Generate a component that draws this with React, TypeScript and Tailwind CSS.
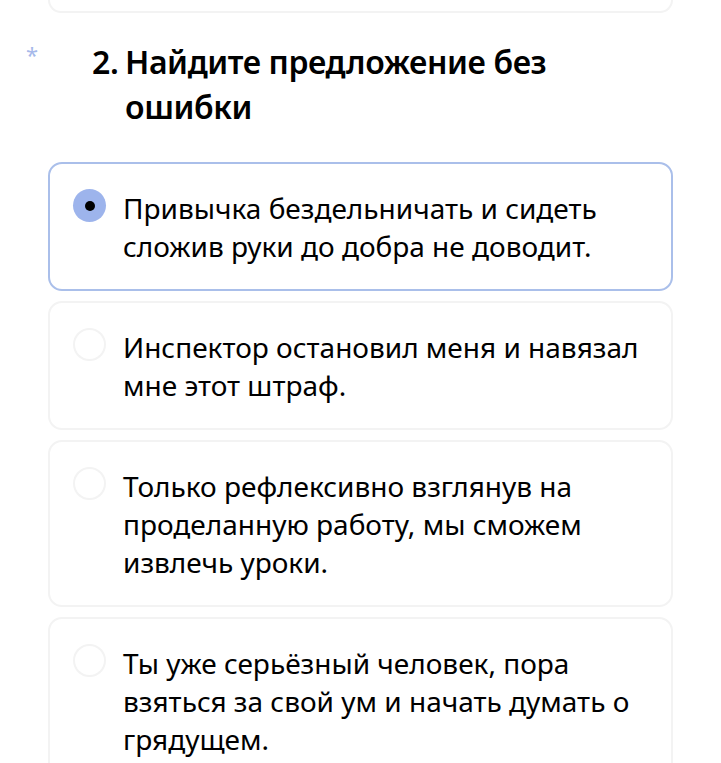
import React from "react";

const options = [
  { lines: ["Привычка бездельничать и сидеть", "сложив руки до добра не доводит."], selected: true },
  { lines: ["Инспектор остановил меня и навязал", "мне этот штраф."], selected: false },
  { lines: ["Только рефлексивно взглянув на", "проделанную работу, мы сможем", "извлечь уроки."], selected: false },
  { lines: ["Ты уже серьёзный человек, пора", "взяться за свой ум и начать думать о", "грядущем."], selected: false },
];

export default function App() {
  return (
    <div
      className="w-[721px] h-[763px] overflow-hidden bg-white text-black"
      style={{ fontFamily: '"Noto Sans", "Open Sans", sans-serif' }}
    >
      <div className="mx-[48px] h-[13px] border-2 border-t-0 border-[#f3f3f3] rounded-b-[14px]" />

      <div className="flex mt-[26px] pl-[26px]">
        <span className="w-[66px] text-[22px] leading-[24px] text-[#a6b9ea] pt-[3px]">*</span>
        <div className="flex text-[32px] leading-[45px] font-semibold tracking-[-0.4px]">
          <span className="w-[33px] shrink-0">2.</span>
          <span>
            Найдите предложение без
            <br />
            ошибки
          </span>
        </div>
      </div>

      <div className="mx-[48px] mt-[33px] flex flex-col gap-[10px]">
        {options.map((o, i) => (
          <div
            key={i}
            className={
              o.selected
                ? "flex items-start border-2 border-[#aabfea] rounded-[14px] pt-[25px] pb-[24px] pl-[23px] pr-[16px]"
                : "flex items-start border-2 border-[#f3f3f3] rounded-[14px] pt-[25px] pb-[24px] pl-[23px] pr-[16px]"
            }
          >
            {o.selected ? (
              <div className="w-[33px] h-[33px] shrink-0 rounded-full bg-[#9db4ec] flex items-center justify-center">
                <div className="w-[10px] h-[10px] rounded-full bg-black" />
              </div>
            ) : (
              <div className="w-[33px] h-[33px] shrink-0 rounded-full border-2 border-[#f3f3f3]" />
            )}
            <div className="ml-[17px] text-[28px] leading-[38px] whitespace-nowrap">
              {o.lines.map((l, j) => (
                <div key={j}>{l}</div>
              ))}
            </div>
          </div>
        ))}
      </div>
    </div>
  );
}
